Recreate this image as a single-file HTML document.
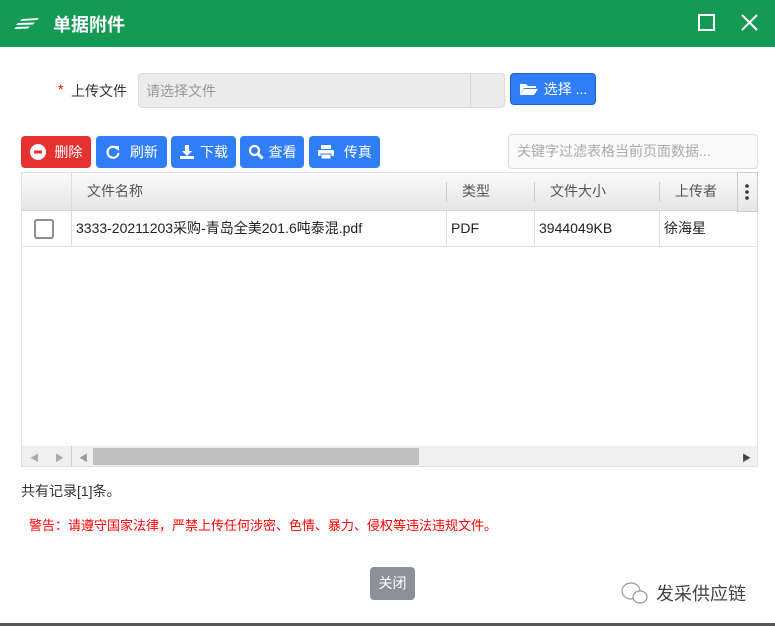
<!DOCTYPE html>
<html><head><meta charset="utf-8"><style>
*{box-sizing:border-box;margin:0;padding:0}
body{width:775px;height:626px;overflow:hidden;background:#fff;font-family:"Liberation Sans","Noto Sans CJK SC",sans-serif;font-size:14px;color:#333;position:relative}
.abs{position:absolute}
.hdr{left:0;top:0;width:775px;height:47px;background:#149a55;color:#fff}
.btn{position:absolute;top:136px;height:32px;border-radius:4px;background:#2f7ef5;color:#fff;font-size:14px;display:flex;align-items:center;justify-content:center;gap:5px}
.th{position:absolute;top:172px;height:39px;line-height:39px;color:#555;font-size:14px}
.td{position:absolute;top:211px;height:35px;line-height:35px;color:#222;font-size:14px}
.vl{position:absolute;width:1px;background:#ddd}
</style></head><body>
<div class="abs hdr">
 <svg class="abs" style="left:13px;top:16px" width="28" height="14" viewBox="0 0 28 14"><path d="M9 3L26 2L24 4L7 5ZM5 7L22 6.5L20 8.5L3 9ZM3 11L17 10.5L15 12.5L1 13Z" fill="#fff"/></svg>
 <div class="abs" style="left:53px;top:11px;font-size:18px;font-weight:bold">单据附件</div>
 <div class="abs" style="left:698px;top:14px;width:17px;height:17px;border:2px solid #fff"></div>
 <svg class="abs" style="left:740px;top:13px" width="19" height="19"><path d="M2 2L17 17M17 2L2 17" stroke="#fff" stroke-width="2"/></svg>
</div>
<div class="abs" style="left:58px;top:81px;color:#e00">*</div>
<div class="abs" style="left:71px;top:81px;color:#333">上传文件</div>
<div class="abs" style="left:138px;top:73px;width:367px;height:35px;background:#ececec;border:1px solid #dcdcdc;border-radius:4px"></div>
<div class="abs" style="left:470px;top:73px;width:1px;height:35px;background:#d5d5d5"></div>
<div class="abs" style="left:146px;top:81px;color:#999">请选择文件</div>
<div class="btn" style="left:510px;top:73px;width:86px;height:32px;border:1px solid #1f5fc0">
 <svg width="20" height="14"><path d="M1 2h6l2 2h8v2H5L1 13z" fill="#fff"/><path d="M5 7h14l-4 6H1z" fill="#fff"/></svg>选择 ...</div>
<div class="btn" style="left:21px;width:70px;background:#e5312f">
 <svg width="16" height="16"><circle cx="8" cy="8" r="8" fill="#fff"/><rect x="4" y="6.5" width="8" height="3" fill="#e5312f"/></svg>&nbsp;删除</div>
<div class="btn" style="left:96px;width:71px">
 <svg width="16" height="16"><path d="M12.5 5A5.5 5.5 0 1 0 13.5 9" stroke="#fff" stroke-width="2.2" fill="none"/><path d="M9 2l5 0 0 5z" fill="#fff"/></svg>&nbsp;刷新</div>
<div class="btn" style="left:171px;width:65px">
 <svg width="16" height="16"><path d="M6 1h4v6h3l-5 5-5-5h3z" fill="#fff"/><rect x="1" y="12" width="14" height="3" fill="#fff"/></svg>下载</div>
<div class="btn" style="left:240px;width:64px">
 <svg width="16" height="16"><circle cx="6.5" cy="6.5" r="4.5" stroke="#fff" stroke-width="2.2" fill="none"/><path d="M10 10l4.5 4.5" stroke="#fff" stroke-width="3"/></svg>查看</div>
<div class="btn" style="left:309px;width:71px">
 <svg width="18" height="16"><rect x="4" y="1" width="10" height="4" fill="#fff"/><rect x="1" y="6" width="16" height="6" rx="1" fill="#fff"/><rect x="4" y="10" width="10" height="5" fill="#fff" stroke="#2f7ef5"/></svg>&nbsp;传真</div>
<div class="abs" style="left:508px;top:134px;width:250px;height:35px;border:1px solid #ddd;border-radius:4px;background:#fafafa;color:#aaa;line-height:33px;padding-left:8px">关键字过滤表格当前页面数据...</div>
<div class="abs" style="left:21px;top:172px;width:737px;height:295px;border:1px solid #e2e2e2"></div>
<div class="abs" style="left:22px;top:173px;width:715px;height:38px;background:linear-gradient(#fafafa,#e6e6e6);border-bottom:1px solid #d5d5d5"></div>
<div class="abs" style="left:737px;top:172px;width:21px;height:40px;background:linear-gradient(#fafafa,#e6e6e6);border:1px solid #ccc"></div>
<svg class="abs" style="left:744px;top:183px" width="6" height="18"><circle cx="3" cy="3" r="1.8" fill="#333"/><circle cx="3" cy="9" r="1.8" fill="#333"/><circle cx="3" cy="15" r="1.8" fill="#333"/></svg>
<div class="vl" style="left:71px;top:173px;height:73px"></div>
<div class="vl" style="left:446px;top:182px;height:20px;background:#ccc"></div>
<div class="vl" style="left:534px;top:182px;height:20px;background:#ccc"></div>
<div class="vl" style="left:659px;top:182px;height:20px;background:#ccc"></div>
<div class="vl" style="left:446px;top:211px;height:35px"></div>
<div class="vl" style="left:534px;top:211px;height:35px"></div>
<div class="vl" style="left:659px;top:211px;height:35px"></div>
<div class="th" style="left:87px">文件名称</div>
<div class="th" style="left:462px">类型</div>
<div class="th" style="left:550px">文件大小</div>
<div class="th" style="left:675px">上传者</div>
<div class="abs" style="left:22px;top:246px;width:735px;height:1px;background:#e5e5e5"></div>
<div class="abs" style="left:34px;top:219px;width:20px;height:20px;border:2px solid #8a8f93;border-radius:3px"></div>
<div class="td" style="left:76px">3333-20211203采购-青岛全美201.6吨泰混.pdf</div>
<div class="td" style="left:451px">PDF</div>
<div class="td" style="left:539px">3944049KB</div>
<div class="td" style="left:664px">徐海星</div>
<div class="abs" style="left:22px;top:446px;width:735px;height:20px;background:#f0f0f0"></div>
<div class="abs" style="left:71px;top:446px;width:1px;height:20px;background:#ccc"></div>
<div class="abs" style="left:93px;top:448px;width:326px;height:17px;background:#c0c0c0"></div>
<div class="abs" style="left:30px;top:451px;color:#aaa;font-size:9px">◀</div>
<div class="abs" style="left:55px;top:451px;color:#aaa;font-size:9px">▶</div>
<div class="abs" style="left:79px;top:451px;color:#999;font-size:9px">◀</div>
<div class="abs" style="left:742px;top:451px;color:#444;font-size:9px">▶</div>
<div class="abs" style="left:21px;top:481px;font-size:14px;color:#333">共有记录[1]条。</div>
<div class="abs" style="left:29px;top:515px;font-size:13px;color:#f00">警告：请遵守国家法律，严禁上传任何涉密、色情、暴力、侵权等违法违规文件。</div>
<div class="abs" style="left:370px;top:567px;width:45px;height:33px;background:#8d9096;border-radius:4px;color:#fff;line-height:33px;text-align:center">关闭</div>
<svg class="abs" style="left:620px;top:580px" width="30" height="28"><ellipse cx="11" cy="11" rx="9" ry="8" fill="none" stroke="#999" stroke-width="1.2"/><ellipse cx="20" cy="17" rx="7" ry="6" fill="#fff" stroke="#999" stroke-width="1.2"/></svg>
<div class="abs" style="left:656px;top:580px;font-size:18px;color:#444">发采供应链</div>
<div class="abs" style="left:0;top:623px;width:775px;height:3px;background:#555"></div>
</body></html>
